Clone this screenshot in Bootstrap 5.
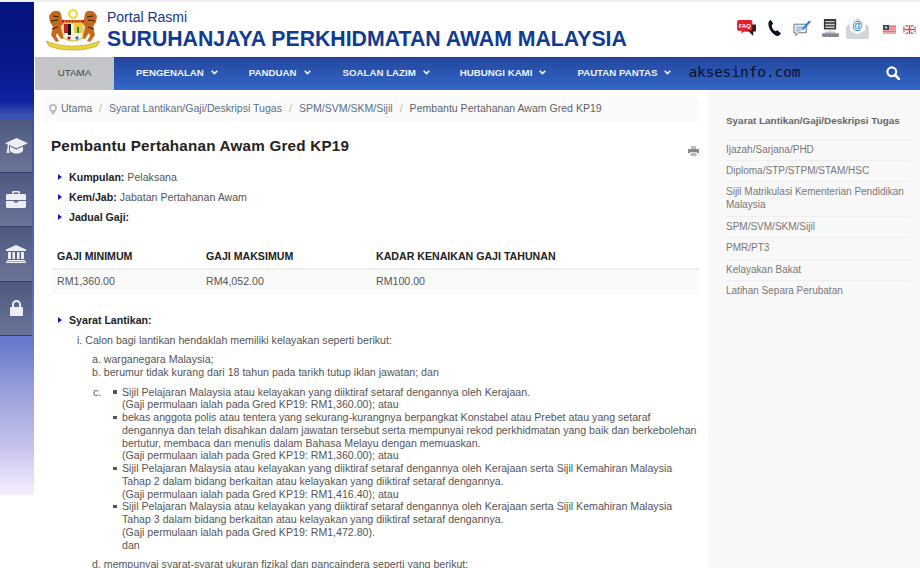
<!DOCTYPE html>
<html lang="ms"><head><meta charset="utf-8"><title>SPA</title>
<link href="https://cdn.jsdelivr.net/npm/bootstrap@5.3.0/dist/css/bootstrap.min.css" rel="stylesheet">
<style>
html,body{height:568px;overflow:hidden}
body{font-family:"Liberation Sans",Arial,sans-serif;font-size:10.62px;line-height:12.75px;color:#555;background:#fff;padding-top:2px;box-shadow:inset 0 2px 0 #f0f0f0}
.rail{width:35px;flex:none;height:566px;background:linear-gradient(180deg,#06127e 0,#081a8c 12%,#0d22a0 17.5%,#3a50b0 20%,#5a68c4 50%,#6a78cc 60%,#9fa5dd 70%,#c8c4ee 79%,#f5eeff 87%,#fff 87.3%);padding-top:117px;border-right:1px solid #fff}
.tabs{width:32px}
.tabi{height:54.2px;background:linear-gradient(180deg,#4d5880,#6b7597);border-bottom:1px solid #333f6a;display:flex;align-items:center;justify-content:center}
.mainc{min-width:0;height:566px}
.brand{height:55px;flex:none;padding-left:10px}
.crest{width:56px;height:43px;flex:none;margin-right:6px}
.ttlw{padding-top:1px}
.t1{font-size:14px;line-height:16px;color:#16348f}
.t2{font-size:21.27px;line-height:24px;font-weight:700;color:#0f3b93;margin-top:2px}
.ticons{padding-right:4px}
.ticons svg{flex:none}
.ic{margin-top:-3px}
.g1{margin-left:10px}.g2{margin-left:12px}.g3{margin-left:11px}.g4{margin-left:7px}.g5{margin-left:14px}
.mainnav{height:33px;flex:none;background:linear-gradient(180deg,#24479f,#3366c8);border-bottom:1px solid #2a70e0;border-top:1px solid #1a3a94;color:#fff;font-size:9.7px}
.utama{width:79px;background:#c4c5c8;color:#444;text-align:center;margin:-1px 0;height:33px;line-height:31px;font-size:9.8px}
.mi{font-weight:700;white-space:nowrap;line-height:29px;color:#eef3ff}
.chev{margin-left:7px;vertical-align:1px}
.nm1{margin-left:22px}.nm2{margin-left:31px}.nm3{margin-left:32px}.nm4{margin-left:30px}.nm5{margin-left:31px}.nm6{margin-left:17px}
.wm{font-family:"DejaVu Sans Mono","Liberation Mono",monospace;font-size:14.4px;color:#0a0f2a;line-height:29px;letter-spacing:-.05px}
.srch{margin:8px 20px 0 0}
.bodyw{min-height:0}
.contentw{width:673px;padding:7px 9px 0 9px;flex:none}
.crumbs{background:#fafafa;height:25px;padding:0 0 0 5px;color:#555;line-height:23px;border-radius:2px;margin-bottom:0;font-size:10.55px}
.crumbs .breadcrumb-item+.breadcrumb-item{padding-left:7px}
.crumbs .breadcrumb-item+.breadcrumb-item::before{color:#bbb;padding-right:7px}
.crumbs a{color:#5b7083;text-decoration:none}
.ttl{font-size:15.2px;line-height:18px;font-weight:700;color:#222;letter-spacing:.23px;padding:15px 0 0 7px;margin:0}
.prt{margin-bottom:-1px}
.meta{list-style:none;margin:16px 0 0;padding:0 0 0 25px}
.meta li{position:relative;height:20.2px}
.meta li::before,.syr::before{content:"";position:absolute;left:-11px;top:3px;border-left:4px solid #1a1ad0;border-top:3px solid transparent;border-bottom:3px solid transparent}
.meta b,.syr{font-weight:700;color:#222}
.gajit{margin:11px 0 0 7px;width:648px;font-size:10.62px}
.gajit th{font-weight:700;color:#222;padding:7px 0 5px 6px;border-bottom:2px solid #eee;line-height:13px;background:#fff;box-shadow:none}
.gajit td{padding:5px 0 6px 6px;background:#fafafa;border:0;color:#555;line-height:13px;box-shadow:none}
.c1{width:149px}.c2{width:170px}
.syr{position:relative;margin:20px 0 0 25px}
.lvl1{margin:8px 0 0 33px}
.lvl2{margin:6px 0 0 48px}
.lvl2b{margin:7px 0 0 48px}
.lvlc{display:flex;margin:7px 0 0 49px}
.lvlc>span{width:12px;flex:none}
.lvlc ul{margin:0;padding:0 0 0 17px;list-style:none;width:606px;flex:none}
.lvlc li{position:relative}
.lvlc li::before{content:"";position:absolute;left:-9px;top:4.500px;width:3.500px;height:3.500px;background:#555}
.side{flex:1;background:#f8f8f8;padding:17px 9px 0 18px;height:478px}
.shead{font-weight:700;color:#666;font-size:9.92px;line-height:13px;padding:7px 0 11.500px;border-bottom:1px solid #eee;white-space:nowrap}
.slink{border-bottom:1px solid #eee;color:#777;padding:3px 0 4.400px;line-height:13px;font-size:10px;background:transparent}
.slink.wrapi{padding-bottom:4.800px}
</style></head>
<body class="d-flex">
<div class="rail">
 <div class="tabs">
  <div class="tabi"><svg width="23" height="18" viewBox="0 0 23 18" fill="#eceef4"><path d="M11.500 1 23 6.200l-11.500 5L4 8v4H2.600V7.300L0 6.200z"/><path d="M5 9.500l6.500 3 6.500-3V14c-2 2-4 2.500-6.500 2.500S7 16 5 14zM2 12h2l.5 4H1.500z"/></svg></div>
  <div class="tabi"><svg width="20" height="17" viewBox="0 0 20 17" fill="#eceef4"><path d="M6 3V1.500C6 .7 6.700 0 7.500 0h5c.8 0 1.500.7 1.500 1.500V3h4.500c.8 0 1.500.7 1.500 1.500V9H0V4.500C0 3.700.7 3 1.500 3zm1.500 0h5V1.500h-5zM0 10h8v1.500h4V10h8v5.500c0 .8-.7 1.500-1.500 1.500h-17C.7 17 0 16.300 0 15.500z"/></svg></div>
  <div class="tabi"><svg width="20" height="18" viewBox="0 0 20 18" fill="#eceef4"><path d="M10 0 20 4.500V6H0V4.500zM2 7h3v7H2zm4.500 0h2.500v7H6.500zm4.500 0h2.500v7H11zm4 0h3v7h-3zM1 15h18v1H1zM0 16.500h20V18H0z"/></svg></div>
  <div class="tabi"><svg width="13" height="16" viewBox="0 0 13 16" fill="#eceef4"><path d="M2 7V4.500a4.500 4.500 0 0 1 9 0V7h1c.6 0 1 .4 1 1v7c0 .6-.4 1-1 1H1c-.6 0-1-.4-1-1V8c0-.6.4-1 1-1zm2 0h5V4.500a2.500 2.500 0 0 0-5 0z"/></svg></div>
 </div>
</div>
<div class="flex-grow-1 d-flex flex-column mainc">
 <header class="brand d-flex align-items-center">
  <svg class="crest" viewBox="0 0 56 43" aria-hidden="true">
   <circle cx="28" cy="6" r="5" fill="#f4d63a"/><circle cx="28" cy="6" r="2.800" fill="#fff"/>
   <path d="M6 5c3-3 9-3 10 1l1 5 2 4-3 3 1 6 3 6-4 1-4-6-1 3 3 5-3 1-5-7 2-8-3-5-1-6z" fill="#c46a1c"/>
   <path d="M50 5c-3-3-9-3-10 1l-1 5-2 4 3 3-1 6-3 6 4 1 4-6 1 3-3 5 3 1 5-7-2-8 3-5 1-6z" fill="#c46a1c"/>
   <path d="M8 8l6 1M6 13l7-1M7 21l6-2M48 8l-6 1M50 13l-7-1M49 21l-6-2" stroke="#3a2210" stroke-width="1.200"/>
   <path d="M17 12h22v3H17z" fill="#c0202a"/><path d="M18 15h20v14c-3 3-6 4-10 4s-7-1-10-4z" fill="#f6f2e0" stroke="#d2b21f"/>
   <path d="M20 12v3M23 12v3M26 12v3M29 12v3M32 12v3M35 12v3" stroke="#f2d33a" stroke-width=".8"/>
   <path d="M23 16h6v11h-6z" fill="#111"/><path d="M26 16h3v11h-3z" fill="#eee"/><path d="M19 16h4v9h-4z" fill="#c0202a"/><path d="M29 16h8v9h-8z" fill="#e7cf3b"/><path d="M32 19h2v6h-2z" fill="#2e8b40"/>
   <circle cx="24" cy="30" r="1.700" fill="#c0202a"/><circle cx="32" cy="30" r="1.700" fill="#2f6fc0"/>
   <path d="M1 33c8 3 16 5 27 5s19-2 27-5l-3 5c-8 3-14 4-24 4S12 41 4 38z" fill="#edd23a" stroke="#a58c17" stroke-width=".5"/>
  </svg>
  <div class="ttlw">
   <div class="t1">Portal Rasmi</div>
   <div class="t2">SURUHANJAYA PERKHIDMATAN AWAM MALAYSIA</div>
  </div>
  <div class="ms-auto d-flex align-items-center ticons">
   <svg class="ic" width="21" height="18" viewBox="0 0 21 20"><path d="M8 6h13v8h-3v5l-5-5H8z" fill="#222"/><path d="M2 1h13c1 0 2 1 2 2v8c0 1-1 2-2 2H9l-4 3v-3H2c-1 0-2-1-2-2V3c0-1 1-2 2-2z" fill="#e0202a"/><text x="8.500" y="9.500" text-anchor="middle" font-size="6.500" font-weight="700" fill="#fff" font-family="Liberation Sans">FAQ</text></svg>
   <svg class="ic g1" width="14" height="18" viewBox="0 0 15 18"><path d="M4 .5 6.500 4 5 6.500c0 2 2 5 4 6l2.200-1L15 15c-1.500 2-3 3-4.500 2.500C5 15 1.500 9.500 1.500 4.500 1.500 2.500 2.500 1 4 .5z" fill="#0d1120"/></svg>
   <svg class="ic g2" width="18" height="18" viewBox="0 0 19 18"><path d="M1 5h13v9H6l-3 3v-3H1z" fill="#eef3f8" stroke="#5f7183"/><path d="M3 8h8M3 10h8M3 12h5" stroke="#5f86ae" stroke-width=".8"/><path d="M10 9l7-8 2 1.500L12 10l-2.500 1z" fill="#2a85d8"/></svg>
   <svg class="ic g3" width="17" height="19" viewBox="0 0 18 20"><path d="M2 0h13v11H2z" fill="#333"/><path d="M3.500 2h10v1.500h-10zM3.500 5h10v1.500h-10zM3.500 8h10v1.500h-10z" fill="#ccc"/><path d="M8.500 11v3M3 14h11" stroke="#9aaec4"/><rect y="15" width="18" height="4" rx="1.500" fill="#888"/></svg>
   <svg class="ic g4" width="23" height="21" viewBox="0 0 24 22"><path d="M0 9 12 0l12 9v11c0 1-1 2-2 2H2c-1 0-2-1-2-2z" fill="#d2d5da"/><path d="M4 3h16v10l-8 4-8-4z" fill="#fafbfc"/><text x="12" y="12" text-anchor="middle" font-size="11" font-weight="700" fill="#1c7fd6" font-family="Liberation Sans">@</text></svg>
   <svg class="g5" width="13" height="9" viewBox="0 0 13 9"><path d="M0 0h13v9H0z" fill="#f3a6a6"/><path d="M0 1.500h13M0 4h13M0 6.500h13" stroke="#e27474"/><path d="M0 0h6v5H0z" fill="#2a3f8f"/><circle cx="3" cy="2.500" r="1.300" fill="#f2d33a"/></svg>
   <svg class="g4" width="13" height="9" viewBox="0 0 13 9"><path d="M0 0h13v9H0z" fill="#8d93bd"/><path d="M0 0l13 9M13 0 0 9" stroke="#fff" stroke-width="1.500"/><path d="M6.500 0v9M0 4.500h13" stroke="#fff" stroke-width="3"/><path d="M6.500 0v9M0 4.500h13" stroke="#d84a5a" stroke-width="1.600"/></svg>
  </div>
 </header>
 <nav class="mainnav d-flex">
  <div class="utama">UTAMA</div>
  <div class="mi nm1">PENGENALAN<svg class="chev" width="7" height="5" viewBox="0 0 7 5"><path d="M.7.8 3.500 3.600 6.300.8" fill="none" stroke="#fff" stroke-width="1.500"/></svg></div>
  <div class="mi nm2">PANDUAN<svg class="chev" width="7" height="5" viewBox="0 0 7 5"><path d="M.7.8 3.500 3.600 6.300.8" fill="none" stroke="#fff" stroke-width="1.500"/></svg></div>
  <div class="mi nm3">SOALAN LAZIM<svg class="chev" width="7" height="5" viewBox="0 0 7 5"><path d="M.7.8 3.500 3.600 6.300.8" fill="none" stroke="#fff" stroke-width="1.500"/></svg></div>
  <div class="mi nm4">HUBUNGI KAMI<svg class="chev" width="7" height="5" viewBox="0 0 7 5"><path d="M.7.8 3.500 3.600 6.300.8" fill="none" stroke="#fff" stroke-width="1.500"/></svg></div>
  <div class="mi nm5">PAUTAN PANTAS<svg class="chev" width="7" height="5" viewBox="0 0 7 5"><path d="M.7.8 3.500 3.600 6.300.8" fill="none" stroke="#fff" stroke-width="1.500"/></svg></div>
  <div class="wm nm6">aksesinfo.com</div>
  <svg class="ms-auto srch" width="14" height="14" viewBox="0 0 14 14"><circle cx="5.800" cy="5.800" r="4.400" fill="none" stroke="#fff" stroke-width="2.200"/><path d="M9 9l4 4" stroke="#fff" stroke-width="2.500" stroke-linecap="round"/></svg>
 </nav>
 <div class="d-flex flex-grow-1 bodyw">
  <main class="contentw">
   <ol class="breadcrumb crumbs">
    <li class="breadcrumb-item"><svg class="me-1" width="8" height="11" viewBox="0 0 8 11"><path d="M4 0a4 4 0 0 1 4 4c0 2.500-3 5-4 7-1-2-4-4.500-4-7a4 4 0 0 1 4-4zm0 1.800A2.200 2.200 0 1 0 4 6.200 2.200 2.200 0 0 0 4 1.800z" fill="#bbb"/></svg><a href="#">Utama</a></li>
    <li class="breadcrumb-item"><a href="#">Syarat Lantikan/Gaji/Deskripsi Tugas</a></li>
    <li class="breadcrumb-item"><a href="#">SPM/SVM/SKM/Sijil</a></li>
    <li class="breadcrumb-item active">Pembantu Pertahanan Awam Gred KP19</li>
   </ol>
   <div class="d-flex justify-content-between align-items-end">
    <h1 class="ttl">Pembantu Pertahanan Awam Gred KP19</h1>
    <svg width="11" height="10" viewBox="0 0 11 10" class="prt"><path d="M3 0h5v3H3z" fill="#bbb"/><path d="M1 3h9c.6 0 1 .4 1 1v3H9V6H2v1H0V4c0-.6.4-1 1-1z" fill="#888"/><path d="M2.500 6.500h6V10h-6z" fill="#bbb"/></svg>
   </div>
   <ul class="meta">
    <li><b>Kumpulan:</b> Pelaksana</li>
    <li><b>Kem/Jab:</b> Jabatan Pertahanan Awam</li>
    <li><b>Jadual Gaji:</b></li>
   </ul>
   <table class="table table-borderless gajit">
    <thead><tr><th class="c1">GAJI MINIMUM</th><th class="c2">GAJI MAKSIMUM</th><th>KADAR KENAIKAN GAJI TAHUNAN</th></tr></thead>
    <tbody><tr><td>RM1,360.00</td><td>RM4,052.00</td><td>RM100.00</td></tr></tbody>
   </table>
   <div class="syr">Syarat Lantikan:</div>
   <div class="lvl1">i. Calon bagi lantikan hendaklah memiliki kelayakan seperti berikut:</div>
   <div class="lvl2">a. warganegara Malaysia;<br>b. berumur tidak kurang dari 18 tahun pada tarikh tutup iklan jawatan; dan</div>
   <div class="lvlc"><span>c.</span><ul>
    <li>Sijil Pelajaran Malaysia atau kelayakan yang diiktiraf setaraf dengannya oleh Kerajaan.<br>(Gaji permulaan ialah pada Gred KP19: RM1,360.00); atau</li>
    <li>bekas anggota polis atau tentera yang sekurang-kurangnya berpangkat Konstabel atau Prebet atau yang setaraf<br>dengannya dan telah disahkan dalam jawatan tersebut serta mempunyai rekod perkhidmatan yang baik dan berkebolehan<br>bertutur, membaca dan menulis dalam Bahasa Melayu dengan memuaskan.<br>(Gaji permulaan ialah pada Gred KP19: RM1,360.00); atau</li>
    <li>Sijil Pelajaran Malaysia atau kelayakan yang diiktiraf setaraf dengannya oleh Kerajaan serta Sijil Kemahiran Malaysia<br>Tahap 2 dalam bidang berkaitan atau kelayakan yang diiktiraf setaraf dengannya.<br>(Gaji permulaan ialah pada Gred KP19: RM1,416.40); atau</li>
    <li>Sijil Pelajaran Malaysia atau kelayakan yang diiktiraf setaraf dengannya oleh Kerajaan serta Sijil Kemahiran Malaysia<br>Tahap 3 dalam bidang berkaitan atau kelayakan yang diiktiraf setaraf dengannya.<br>(Gaji permulaan ialah pada Gred KP19: RM1,472.80).<br>dan</li>
   </ul></div>
   <div class="lvl2b">d. mempunyai syarat-syarat ukuran fizikal dan pancaindera seperti yang berikut:</div>
  </main>
  <aside class="side">
   <div class="shead">Syarat Lantikan/Gaji/Deskripsi Tugas</div>
   <div class="list-group list-group-flush">
    <div class="list-group-item slink">Ijazah/Sarjana/PHD</div>
    <div class="list-group-item slink">Diploma/STP/STPM/STAM/HSC</div>
    <div class="list-group-item slink wrapi">Sijil Matrikulasi Kementerian Pendidikan Malaysia</div>
    <div class="list-group-item slink">SPM/SVM/SKM/Sijil</div>
    <div class="list-group-item slink">PMR/PT3</div>
    <div class="list-group-item slink">Kelayakan Bakat</div>
    <div class="list-group-item slink">Latihan Separa Perubatan</div>
   </div>
  </aside>
 </div>
</div>
</body></html>
